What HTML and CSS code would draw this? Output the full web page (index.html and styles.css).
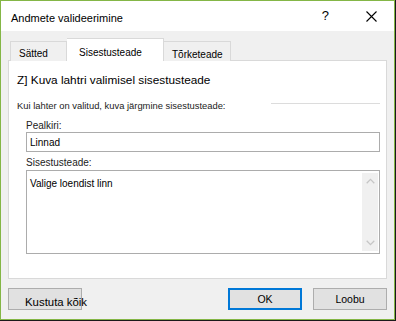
FILE: index.html
```html
<!DOCTYPE html>
<html lang="et">
<head>
    <meta charset="UTF-8">
    <meta name="viewport" content="width=device-width, initial-scale=1.0">
    <title>Andmete valideerimine</title>
    <link rel="stylesheet" href="styles.css">
</head>
<body>

    <div class="dialog">
        <div class="title-bar">
            <span class="title">Andmete valideerimine</span>
            <span class="help">?</span>
            <svg class="close" width="11" height="11" viewBox="0 0 11 11">
                <path d="M0.5 0.5 L10.5 10.5 M10.5 0.5 L0.5 10.5" stroke="#000" stroke-width="1.1" fill="none" />
            </svg>
        </div>

        <div class="dialog-body">
            <div class="tabs">
                <div class="tab tab-first">Sätted</div>
                <div class="tab tab-active">Sisestusteade</div>
                <div class="tab tab-last">Tõrketeade</div>
            </div>

            <div class="panel">
                <div class="check-row">Z] Kuva lahtri valimisel sisestusteade</div>

                <div class="group-row">
                    <span>Kui lahter on valitud, kuva järgmine sisestusteade:</span>
                    <span class="group-line"></span>
                </div>

                <div class="field-label">Pealkiri:</div>
                <div class="text-box">Linnad</div>

                <div class="field-label field-label-second">Sisestusteade:</div>
                <div class="text-area">
                    <span class="area-text">Valige loendist linn</span>
                    <div class="scrollbar">
                        <svg width="9" height="6" viewBox="0 0 9 6">
                            <path d="M0.7 5.2 L4.5 1.4 L8.3 5.2" stroke="#c6c6c6" stroke-width="1.3" fill="none" />
                        </svg>
                        <svg width="9" height="6" viewBox="0 0 9 6">
                            <path d="M0.7 0.8 L4.5 4.6 L8.3 0.8" stroke="#c6c6c6" stroke-width="1.3" fill="none" />
                        </svg>
                    </div>
                </div>
            </div>

            <div class="button-row">
                <button class="btn btn-clear">Kustuta kõik</button>
                <span class="spacer"></span>
                <button class="btn btn-ok">OK</button>
                <button class="btn">Loobu</button>
            </div>
        </div>
    </div>

</body>
</html>
```

FILE: styles.css
```css
body {
    margin: 0;
    background-color: #1a1a1a;
    font-family: 'Liberation Sans', Arial, sans-serif;
    color: #000;
}

.dialog {
    width: 395px;
    height: 320px;
    box-sizing: border-box;
    border: 1px solid #84b646;
    background-color: #f0f0f0;
    display: flex;
    flex-direction: column;
}

.title-bar {
    height: 30px;
    background-color: #fff;
    display: flex;
    align-items: center;
    padding-left: 10px;
    font-size: 11px;
}

.title {
    flex: 1;
    padding-top: 3px;
}

.help {
    font-size: 13px;
    margin-right: 37px;
    margin-top: -2px;
}

.close {
    margin-right: 17px;
}

.dialog-body {
    flex: 1;
    display: flex;
    flex-direction: column;
    padding: 0 7px 0 7px;
}

.tabs {
    display: flex;
    align-items: flex-end;
    height: 30px;
    padding-left: 2px;
    margin-bottom: -1px;
    font-size: 10px;
    position: relative;
    z-index: 1;
}

.tab {
    height: 20px;
    box-sizing: border-box;
    border: 1px solid #d9d9d9;
    border-bottom: none;
    background-color: #f0f0f0;
    padding: 6px 0 0 8px;
}

.tab-first {
    width: 57px;
    padding-left: 8px;
}

.tab-active {
    width: 97px;
    height: 23px;
    background-color: #fff;
    border-left: none;
    padding: 8px 0 0 12px;
}

.tab-last {
    width: 67px;
    border-left: none;
    padding-left: 8px;
    padding-top: 7px;
}

.panel {
    height: 219px;
    box-sizing: border-box;
    border: 1px solid #d9d9d9;
    background-color: #fff;
    padding: 12px 6px 0 17px;
}

.check-row {
    font-size: 11.8px;
    margin-left: -9px;
    height: 19px;
}

.group-row {
    display: flex;
    align-items: center;
    font-size: 9.4px;
    color: #222;
    margin-left: -9px;
    margin-top: 8px;
}

.group-line {
    flex: 1;
    height: 1px;
    background-color: #dcdcdc;
    margin-left: 46px;
    margin-top: -4px;
}

.field-label {
    font-size: 10px;
    color: #222;
    margin-top: 9px;
    height: 12px;
}

.field-label-second {
    margin-top: 5px;
    height: 13px;
}

.text-box {
    height: 20px;
    box-sizing: border-box;
    border: 1px solid #acacac;
    font-size: 10px;
    padding: 4px 0 0 3px;
}

.text-area {
    height: 84px;
    box-sizing: border-box;
    border: 1px solid #acacac;
    display: flex;
    justify-content: space-between;
    padding: 2px 1px 2px 3px;
    font-size: 10px;
}

.area-text {
    margin-top: 5px;
}

.scrollbar {
    width: 16px;
    background-color: #f0f0f0;
    display: flex;
    flex-direction: column;
    justify-content: space-between;
    align-items: center;
    padding: 5px 0 5px 0;
}

.button-row {
    display: flex;
    align-items: flex-start;
    padding-top: 9px;
}

.btn {
    width: 74px;
    height: 22px;
    box-sizing: border-box;
    border: 1px solid #adadad;
    background-color: #e1e1e1;
    font-family: 'Liberation Sans', Arial, sans-serif;
    font-size: 10.5px;
    color: #000;
    padding: 0;
}

.btn-clear {
    text-align: left;
    white-space: nowrap;
    overflow: visible;
    font-size: 11.4px;
    padding: 6px 0 0 16px;
}

.spacer {
    flex: 1;
}

.btn-ok {
    border: 2px solid #0078d7;
    margin-right: 11px;
}
```
